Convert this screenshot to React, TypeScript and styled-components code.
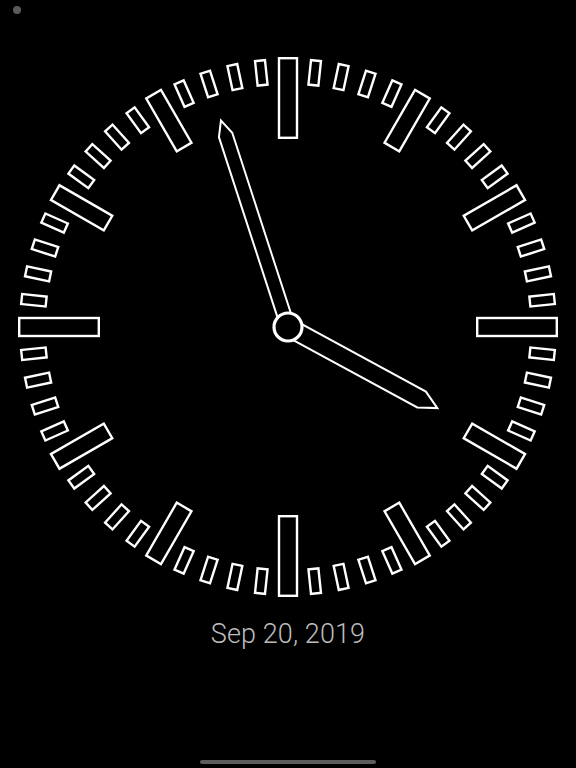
import styled, { createGlobalStyle } from "styled-components";

const GlobalStyle = createGlobalStyle`
    html, body {
        margin: 0;
        padding: 0;
        background: #000;
    }
    #root {
        height: 768px;
    }
`;

const Screen = styled.div`
    position: relative;
    width: 576px;
    height: 768px;
    display: flex;
    flex-direction: column;
    align-items: center;
    background-color: #000;
    overflow: hidden;
`;

const StatusDot = styled.span`
    position: absolute;
    top: 6px;
    left: 13px;
    width: 8px;
    height: 8px;
    border-radius: 50%;
    background-color: #5a5a5a;
`;

const Dial = styled.svg`
    display: block;
    width: 560px;
    height: 560px;
    margin-top: 47px;
    flex-shrink: 0;
`;

const DateLabel = styled.div`
    margin-top: 11px;
    font-family: Roboto, "Liberation Sans", sans-serif;
    font-weight: 300;
    font-size: 27px;
    line-height: 32px;
    letter-spacing: 0.1px;
    color: #bcbcbc;
`;

const HomeBar = styled.div`
    margin-top: auto;
    margin-bottom: 4px;
    width: 176px;
    height: 4px;
    border-radius: 2px;
    background-color: #5c5c5c;
`;

const C = 280; // dial centre in svg coords

type HandProps = { angle: number; half: number; shoulder: number; tip: number };

function Hand({ angle, half, shoulder, tip }: HandProps) {
    const pts = [
        [-half, 6],
        [-half, -shoulder],
        [0, -tip],
        [half, -shoulder],
        [half, 6],
    ]
        .map((p) => p.join(","))
        .join(" ");
    return (
        <polygon
            points={pts}
            fill="none"
            stroke="#fff"
            strokeWidth={2}
            strokeLinejoin="miter"
            transform={`translate(${C} ${C}) rotate(${angle})`}
        />
    );
}

function Ticks() {
    const marks = [];
    for (let i = 0; i < 60; i++) {
        const rot = `translate(${C} ${C}) rotate(${i * 6})`;
        if (i % 15 === 0) {
            // cardinal hours are the long ones
            marks.push(<rect key={i} x={-9} y={-268.8} width={18} height={79.6} transform={rot} />);
        } else if (i % 5 === 0) {
            marks.push(<rect key={i} x={-8.5} y={-268.8} width={17} height={61} transform={rot} />);
        } else {
            marks.push(<rect key={i} x={-5} y={-267.8} width={10} height={24.6} transform={rot} />);
        }
    }
    return (
        <g fill="none" stroke="#fff" strokeWidth={2.4}>
            {marks}
        </g>
    );
}

export default function App() {
    // 3:57
    const minute = 57;
    const hour = 3 + minute / 60;

    return (
        <>
            <GlobalStyle />
            <Screen>
                <StatusDot />
                <Dial viewBox="0 0 560 560">
                    <Ticks />
                    <Hand angle={hour * 30} half={9} shoulder={152} tip={170} />
                    <Hand angle={minute * 6} half={7} shoulder={202} tip={217} />
                    <circle cx={C} cy={C} r={14} fill="#000" stroke="#fff" strokeWidth={3.2} />
                </Dial>
                <DateLabel>Sep 20, 2019</DateLabel>
                <HomeBar />
            </Screen>
        </>
    );
}
